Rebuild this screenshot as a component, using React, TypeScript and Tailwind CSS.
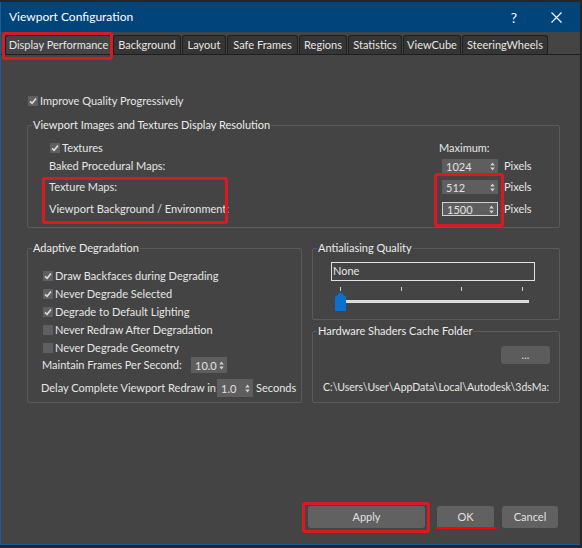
import React from "react";

const TABS: [string, number][] = [
  ["Display Performance", 107],
  ["Background", 68],
  ["Layout", 44],
  ["Safe Frames", 71],
  ["Regions", 48],
  ["Statistics", 54],
  ["ViewCube", 58],
  ["SteeringWheels", 86],
];

function Check({ checked }: { checked?: boolean }) {
  return (
    <span className="flex h-[10px] w-[10px] shrink-0 items-center justify-center bg-[#5f5f5f]">
      {checked && (
        <svg width="8" height="8" viewBox="0 0 8 8">
          <path d="M1 4.3 L3.1 6.3 L7 1.4" stroke="#dcdcdc" strokeWidth="1.6" fill="none" />
        </svg>
      )}
    </span>
  );
}

function Spinner({ value, w, h = 14, focused }: { value: string; w: number; h?: number; focused?: boolean }) {
  return (
    <div
      className={`flex shrink-0 items-center justify-between bg-[#5e5e5e] pl-[4px] pr-[3px] text-[#e2e2e2] ${
        focused ? "border border-[#cfcfcf] pl-[3px] pr-[2px]" : ""
      }`}
      style={{ width: w, height: h }}
    >
      <span className="leading-none">{value}</span>
      <svg width="5" height="9" viewBox="0 0 5 9">
        <path d="M2.5 0.5 L4.8 3.5 L0.2 3.5 Z M2.5 8.5 L4.8 5.5 L0.2 5.5 Z" fill="#cfcfcf" />
      </svg>
    </div>
  );
}

function Group({ title, className, children }: { title: string; className: string; children?: React.ReactNode }) {
  return (
    <fieldset className={`rounded-[2px] border border-[#5a5a5a] ${className}`}>
      <legend className="ml-[4px] px-[1px] leading-[14px] text-[#ececec]">{title}</legend>
      {children}
    </fieldset>
  );
}

export default function App() {
  return (
    <div className="relative h-[548px] w-[582px] overflow-hidden whitespace-nowrap bg-[#262626] font-['Lato','Liberation_Sans',sans-serif] text-[11px] text-[#e6e6e6]">
      <div className="mt-[2px] flex h-[543px] w-[580px] flex-col border-b border-l border-[#1b5d9c] bg-[#444444]">
        {/* Title bar */}
        <div className="flex h-[30px] shrink-0 items-center bg-[#00447a] pl-[8px] text-[12px] text-white">
          <span className="flex-1">Viewport Configuration</span>
          <span className="mr-[34px] text-[14px]">?</span>
          <svg className="mr-[18px]" width="11" height="11" viewBox="0 0 11 11">
            <path d="M0.5 0.5 L10.5 10.5 M10.5 0.5 L0.5 10.5" stroke="#ffffff" strokeWidth="1.2" />
          </svg>
        </div>

        {/* Tabs */}
        <div className="flex h-[23px] shrink-0 items-end gap-[1px] border-b border-[#1f1f1f] pl-[4px]">
          {TABS.map(([label, w], i) => (
            <div
              key={label}
              className={`flex h-[19px] items-center justify-center rounded-t-[3px] border border-b-0 border-[#1f1f1f] ${
                i === 0 ? "bg-[#444444]" : "bg-[#353535]"
              }`}
              style={{ width: w }}
            >
              {label}
            </div>
          ))}
        </div>

        {/* Body */}
        <div className="flex flex-1 flex-col pl-[26px]">
          <div className="mt-[40px] flex h-[12px] items-center pl-[1px]">
            <Check checked />
            <span className="ml-[2px]">Improve Quality Progressively</span>
          </div>

          <Group title="Viewport Images and Textures Display Resolution" className="mt-[11px] h-[110px] w-[533px]">
            <div className="mt-[9px] flex h-[14px] items-center">
              <div className="flex flex-1 items-center pl-[22px]">
                <Check checked />
                <span className="ml-[2px]">Textures</span>
              </div>
              <div className="w-[120px]">Maximum:</div>
            </div>
            {[
              ["Baked Procedural Maps:", "1024", "mt-[4px]"],
              ["Texture Maps:", "512", "mt-[7px]"],
              ["Viewport Background / Environment:", "1500", "mt-[8px]"],
            ].map(([label, value, mt], i) => (
              <div key={label} className={`flex h-[14px] items-center ${mt}`}>
                <div className="flex-1 pl-[21px]">{label}</div>
                <div className="flex w-[120px] items-center">
                  <div className="ml-[3px]">
                    <Spinner value={value} w={56} focused={i === 2} />
                  </div>
                  <span className="ml-[6px]">Pixels</span>
                </div>
              </div>
            ))}
          </Group>

          <div className="mt-[13px] flex gap-[10px]">
            <Group title="Adaptive Degradation" className="h-[162px] w-[275px]">
              <div className="mt-[12px]">
                {[
                  ["Draw Backfaces during Degrading", true],
                  ["Never Degrade Selected", true],
                  ["Degrade to Default Lighting", true],
                  ["Never Redraw After Degradation", false],
                  ["Never Degrade Geometry", false],
                ].map(([label, on]) => (
                  <div key={label as string} className="flex h-[18px] items-center pl-[15px]">
                    <Check checked={on as boolean} />
                    <span className="ml-[2px]">{label}</span>
                  </div>
                ))}
              </div>
              <div className="flex h-[16px] items-center pl-[14px]">
                <span className="w-[149px]">Maintain Frames Per Second:</span>
                <Spinner value="10.0" w={36} h={16} />
              </div>
              <div className="mt-[6px] flex h-[18px] items-center pl-[13px]">
                <span className="w-[176px]">Delay Complete Viewport Redraw in</span>
                <Spinner value="1.0" w={36} h={18} />
                <span className="ml-[3px]">Seconds</span>
              </div>
            </Group>

            <div className="flex w-[248px] flex-col gap-[4px]">
              <Group title="Antialiasing Quality" className="h-[79px] w-[248px]">
                <div className="ml-[18px] mt-[7px] flex h-[19px] w-[204px] items-center border border-[#e0e0e0] pl-[1px]">
                  None
                </div>
                <div className="ml-[18px] mt-[6px] flex h-[4px] w-[204px]">
                  <span className="ml-[9px] h-[4px] w-px bg-[#cfcfcf]" />
                  <span className="ml-[60px] h-[4px] w-px bg-[#cfcfcf]" />
                  <span className="ml-[59px] h-[4px] w-px bg-[#cfcfcf]" />
                  <span className="ml-[60px] h-[4px] w-px bg-[#cfcfcf]" />
                </div>
                <div className="ml-[22px] mt-[1px] flex h-[19px] items-start">
                  <svg width="11" height="19" viewBox="0 0 11 19" className="shrink-0">
                    <polygon points="5.5,0 11,5 11,19 0,19 0,5" fill="#0b6fd0" />
                  </svg>
                  <span className="mt-[8px] h-[3px] w-[183px] bg-[#dcdcdc]" />
                </div>
              </Group>

              <Group title="Hardware Shaders Cache Folder" className="h-[79px] w-[248px]">
                <div className="mt-[8px] flex justify-end pr-[9px]">
                  <div className="flex h-[18px] w-[49px] items-center justify-center rounded-[3px] bg-[#5c5c5c] text-[#dcdcdc]">
                    ...
                  </div>
                </div>
                <div className="ml-[10px] mt-[16px] w-[234px] text-[10.5px] leading-[14px]">
                  C:\Users\User\AppData\Local\Autodesk\3dsMa:
                </div>
              </Group>
            </div>
          </div>

          <div className="mt-[103px] flex justify-end pr-[22px]">
            <div className="flex h-[22px] w-[117px] items-center justify-center rounded-[3px] bg-[#616161] text-[#e0e0e0]">
              Apply
            </div>
            <div className="ml-[12px] flex h-[22px] w-[57px] items-center justify-center rounded-[3px] bg-[#616161] text-[#e0e0e0]">
              OK
            </div>
            <div className="ml-[8px] flex h-[22px] w-[56px] items-center justify-center rounded-[3px] bg-[#616161] text-[#e0e0e0]">
              Cancel
            </div>
          </div>
        </div>
      </div>

      {/* Red annotation marks */}
      <div className="absolute left-[2px] top-[32px] h-[28px] w-[111px] rounded-[3px] border-[3px] border-[#d81b22]" />
      <div className="absolute left-[42px] top-[177px] h-[47px] w-[186px] rounded-[3px] border-[3px] border-[#d81b22]" />
      <div className="absolute left-[434px] top-[173px] h-[54px] w-[70px] rounded-[3px] border-[3px] border-[#d81b22]" />
      <div className="absolute left-[302px] top-[502px] h-[31px] w-[128px] rounded-[3px] border-[3px] border-[#d81b22]" />
      <div className="absolute left-[436px] top-[527px] h-[2px] w-[61px] bg-[#ff0000]" />
    </div>
  );
}
